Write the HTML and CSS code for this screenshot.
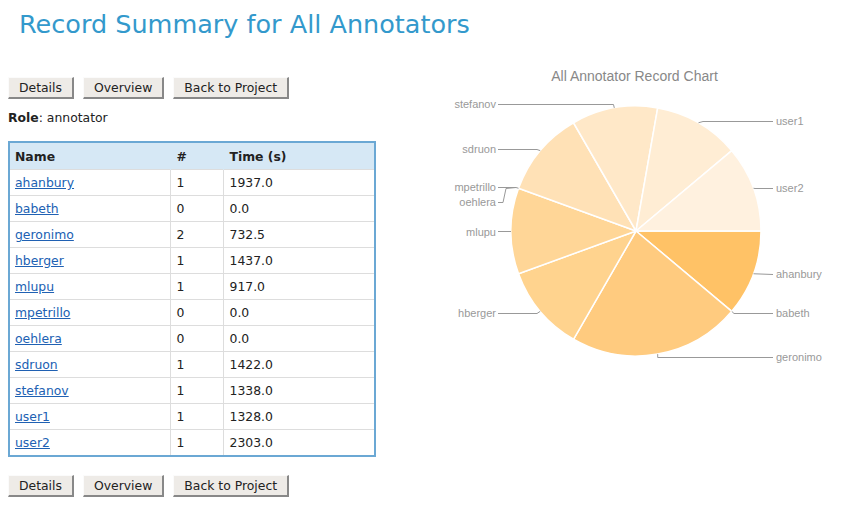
FILE: index.html
```html
<!DOCTYPE html>
<html>
<head>
<meta charset="utf-8">
<title>Record Summary for All Annotators</title>
<link rel="stylesheet" href="styles.css">
</head>
<body>
<h1 class="title">Record Summary for All Annotators</h1>
<div class="main">
  <div class="left">
    <div class="btns">
      <button class="btn">Details</button>
      <button class="btn">Overview</button>
      <button class="btn">Back to Project</button>
    </div>
    <p class="role"><b>Role</b>: annotator</p>
    <table class="grid">
      <colgroup><col class="c1"><col class="c2"><col class="c3"></colgroup>
      <thead><tr><th>Name</th><th>#</th><th>Time (s)</th></tr></thead>
      <tbody>
        <tr><td><a href="#">ahanbury</a></td><td>1</td><td>1937.0</td></tr>
        <tr><td><a href="#">babeth</a></td><td>0</td><td>0.0</td></tr>
        <tr><td><a href="#">geronimo</a></td><td>2</td><td>732.5</td></tr>
        <tr><td><a href="#">hberger</a></td><td>1</td><td>1437.0</td></tr>
        <tr><td><a href="#">mlupu</a></td><td>1</td><td>917.0</td></tr>
        <tr><td><a href="#">mpetrillo</a></td><td>0</td><td>0.0</td></tr>
        <tr><td><a href="#">oehlera</a></td><td>0</td><td>0.0</td></tr>
        <tr><td><a href="#">sdruon</a></td><td>1</td><td>1422.0</td></tr>
        <tr><td><a href="#">stefanov</a></td><td>1</td><td>1338.0</td></tr>
        <tr><td><a href="#">user1</a></td><td>1</td><td>1328.0</td></tr>
        <tr><td><a href="#">user2</a></td><td>1</td><td>2303.0</td></tr>
      </tbody>
    </table>
    <div class="btns bottom">
      <button class="btn">Details</button>
      <button class="btn">Overview</button>
      <button class="btn">Back to Project</button>
    </div>
  </div>
  <svg class="chart" width="422" height="320" viewBox="419 60 422 320" xmlns="http://www.w3.org/2000/svg">
    <text class="ctitle" x="634.5" y="81" text-anchor="middle">All Annotator Record Chart</text>
    <g class="slices">
      <path fill="#FFC266" d="M636,231 L761,231 A125,125 0 0 1 731.76,311.35 Z"/>
      <path fill="#FFCB7F" d="M636,231 L731.76,311.35 A125,125 0 0 1 573.5,339.25 Z"/>
      <path fill="#FFD38E" d="M636,231 L573.5,339.25 A125,125 0 0 1 518.54,273.75 Z"/>
      <path fill="#FFD697" d="M636,231 L518.54,273.75 A125,125 0 0 1 518.54,188.25 Z"/>
      <path fill="#FFE1B6" d="M636,231 L518.54,188.25 A125,125 0 0 1 573.5,122.75 Z"/>
      <path fill="#FFE8C8" d="M636,231 L573.5,122.75 A125,125 0 0 1 657.71,107.9 Z"/>
      <path fill="#FFEDD4" d="M636,231 L657.71,107.9 A125,125 0 0 1 731.76,150.65 Z"/>
      <path fill="#FFF1DF" d="M636,231 L731.76,150.65 A125,125 0 0 1 761,231 Z"/>
    </g>
    <g class="leaders">
      <path d="M614.3,107.9 L613.5,104.5 L498,104.5"/>
      <path d="M698.5,122.75 L703,121.5 L773,121.5"/>
      <path d="M540.2,150.6 L537,149.5 L498,149.5"/>
      <path d="M518.5,188.25 L516,187.5 L498,187.5"/>
      <path d="M516,187.5 L506,188.5 L503,202.5 L498,202.5"/>
      <path d="M753.5,188.25 L755,188.5 L773,188.5"/>
      <path d="M511,231.5 L498,231.5"/>
      <path d="M753.5,273.75 L773,274.5"/>
      <path d="M731.8,311.4 L734,313.5 L773,313.5"/>
      <path d="M540.2,311.35 L537,313.5 L498,313.5"/>
      <path d="M657.7,354.1 L657.7,357.5 L773,357.5"/>
    </g>
    <g class="labels">
      <text x="496" y="108" text-anchor="end">stefanov</text>
      <text x="776" y="125">user1</text>
      <text x="496" y="153" text-anchor="end">sdruon</text>
      <text x="496" y="191" text-anchor="end">mpetrillo</text>
      <text x="496" y="206" text-anchor="end">oehlera</text>
      <text x="776" y="192">user2</text>
      <text x="496" y="235.5" text-anchor="end">mlupu</text>
      <text x="776" y="278">ahanbury</text>
      <text x="776" y="317">babeth</text>
      <text x="496" y="317" text-anchor="end">hberger</text>
      <text x="776" y="361">geronimo</text>
    </g>
  </svg>
</div>
</body>
</html>
```
FILE: styles.css
```css
html, body {
  background: #ffffff;
}
body {
  margin: 8px;
  font-family: "DejaVu Sans", Verdana, sans-serif;
  font-size: 12.4px;
  color: #222222;
}
.title {
  margin: 0;
  padding-left: 11px;
  font-size: 25.5px;
  line-height: 32px;
  font-weight: normal;
  color: #3399cc;
}
.main {
  display: flex;
  align-items: flex-start;
  gap: 43px;
  margin-top: 20px;
}
.left {
  width: 368px;
  padding-top: 17px;
  flex: none;
}
.btns {
  display: flex;
  gap: 9px;
}
.btns.bottom {
  margin-top: 18px;
}
.btn {
  height: 22px;
  padding: 0 10px;
  margin: 0;
  font-family: "DejaVu Sans", Verdana, sans-serif;
  font-size: 12.4px;
  color: #222222;
  background: #eeebe7;
  border-style: solid;
  border-width: 1px 2px 2px 1px;
  border-color: #fbfbfb #888888 #888888 #fbfbfb;
  border-radius: 0;
}
.role {
  margin: 11px 0 0 0;
  line-height: 16px;
}
.grid {
  margin-top: 15px;
  width: 366px;
  border-collapse: collapse;
  border: 2px solid #6ba8d4;
  table-layout: fixed;
}
.c1 { width: 161px; }
.c2 { width: 53px; }
.c3 { width: 152px; }
.grid th {
  background: #d6e8f5;
  text-align: left;
  font-weight: bold;
  height: 26px;
  padding: 0 6px;
  border: 1px solid #d6e8f5;
  border-bottom: none;
}
.grid th:first-child { padding-left: 5px; }
.grid td {
  height: 25px;
  padding: 0 6px;
  border: 1px solid #dddddd;
}
.grid td:first-child { padding-left: 5px; }
.grid a {
  color: #2061b3;
  text-decoration: underline;
}
.chart {
  flex: none;
  display: block;
}
.ctitle {
  font-family: "Liberation Sans", Arial, sans-serif;
  font-size: 14px;
  fill: #888888;
}
.slices path {
  stroke: #ffffff;
  stroke-width: 1.5;
  stroke-linejoin: round;
}
.leaders path {
  fill: none;
  stroke: #999999;
  stroke-width: 1;
}
.labels text {
  font-family: "Liberation Sans", Arial, sans-serif;
  font-size: 11px;
  fill: #999999;
}
```
